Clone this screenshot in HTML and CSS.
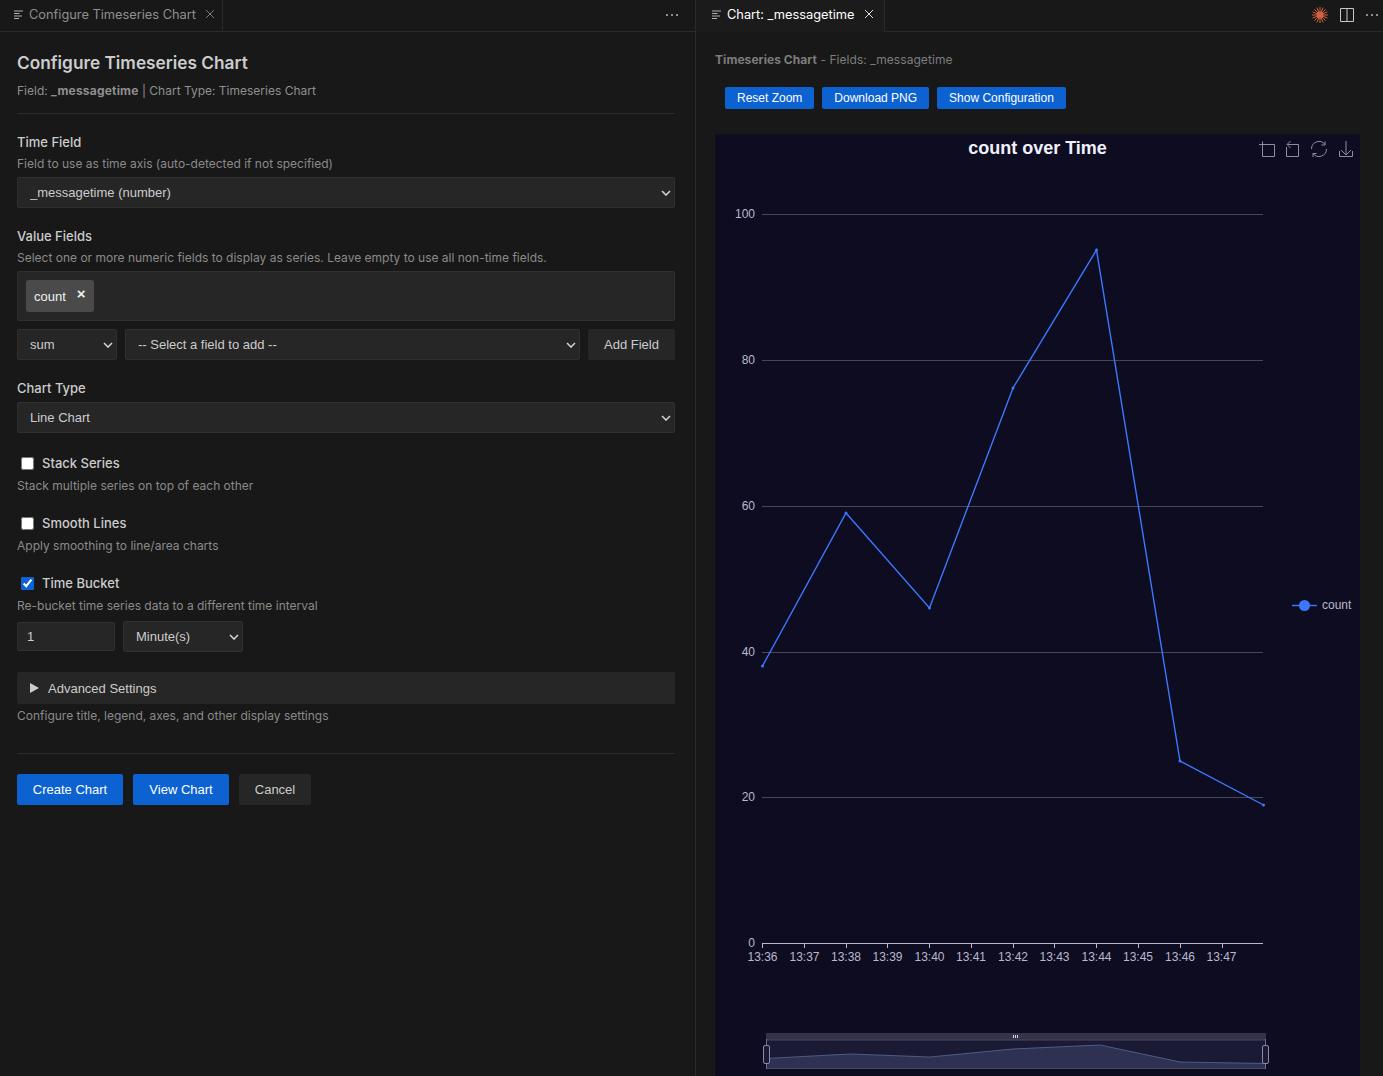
FILE: index.html
```html
<!DOCTYPE html>
<html>
<head>
    <meta charset="utf-8">
    <title>Configure Timeseries Chart</title>
    <link rel="stylesheet" href="styles.css">
</head>
<body>
<div class="workbench">

    <section class="pane pane-left">
        <div class="tabbar">
            <div class="tab">
                <svg class="tab-icon" viewBox="0 0 9 9"><path d="M0 1h9M0 3.500h5.500M0 6h8M0 8.500h5"/></svg>
                <span>Configure Timeseries Chart</span>
                <svg class="tab-close" viewBox="0 0 10 10"><path d="M1 1l8 8M9 1l-8 8"/></svg>
            </div>
            <div class="tabbar-actions">
                <span class="dots"><i></i><i></i><i></i></span>
            </div>
        </div>

        <div class="config">
            <h1>Configure Timeseries Chart</h1>
            <p class="meta">Field: <b>_messagetime</b> | Chart Type: Timeseries Chart</p>
            <hr class="rule">

            <div class="group">
                <label class="group-label">Time Field</label>
                <p class="hint">Field to use as time axis (auto-detected if not specified)</p>
                <select class="select"><option>_messagetime (number)</option></select>
            </div>

            <div class="group">
                <label class="group-label">Value Fields</label>
                <p class="hint">Select one or more numeric fields to display as series. Leave empty to use all non-time fields.</p>
                <div class="chipbox">
                    <span class="chip">count <b>×</b></span>
                </div>
                <div class="add-row">
                    <select class="select select-agg"><option>sum</option></select>
                    <select class="select select-field"><option>-- Select a field to add --</option></select>
                    <button class="btn-add">Add Field</button>
                </div>
            </div>

            <div class="group group-type">
                <label class="group-label">Chart Type</label>
                <select class="select"><option>Line Chart</option></select>
            </div>

            <div class="check-group">
                <label class="check"><input type="checkbox"> Stack Series</label>
                <p class="hint">Stack multiple series on top of each other</p>
            </div>
            <div class="check-group">
                <label class="check"><input type="checkbox"> Smooth Lines</label>
                <p class="hint">Apply smoothing to line/area charts</p>
            </div>
            <div class="check-group">
                <label class="check"><input type="checkbox" checked> Time Bucket</label>
                <p class="hint">Re-bucket time series data to a different time interval</p>
                <div class="bucket-row">
                    <input class="bucket-num" type="text" value="1">
                    <select class="select select-unit"><option>Minute(s)</option></select>
                </div>
            </div>

            <div class="advanced">
                <span class="caret"></span>
                <span>Advanced Settings</span>
            </div>
            <p class="hint hint-adv">Configure title, legend, axes, and other display settings</p>

            <hr class="rule rule-bottom">

            <div class="actions">
                <button class="btn btn-primary btn-create">Create Chart</button>
                <button class="btn btn-primary btn-view">View Chart</button>
                <button class="btn btn-cancel">Cancel</button>
            </div>
        </div>
    </section>

    <section class="pane pane-right">
        <div class="tabbar">
            <div class="tab tab-active">
                <svg class="tab-icon" viewBox="0 0 9 9"><path d="M0 1h9M0 3.500h5.500M0 6h8M0 8.500h5"/></svg>
                <span>Chart: _messagetime</span>
                <svg class="tab-close" viewBox="0 0 10 10"><path d="M1 1l8 8M9 1l-8 8"/></svg>
            </div>
            <div class="tabbar-actions">
                <svg class="spark" viewBox="0 0 16 16">
                    <path d="M8 0v16M0 8h16M2.300 2.300l11.400 11.400M13.700 2.300L2.300 13.700M4.900 .6l6.200 14.800M11.100 .6L4.900 15.400M.6 4.900l14.800 6.200M15.400 4.900L.6 11.100"/>
                    <circle cx="8" cy="8" r="3"/>
                </svg>
                <svg class="split" viewBox="0 0 14 14"><path d="M.5 .5h13v13h-13zM7 .5v13"/></svg>
                <span class="dots"><i></i><i></i><i></i></span>
            </div>
        </div>

        <div class="viewer">
            <p class="viewer-title"><b>Timeseries Chart</b> - Fields: _messagetime</p>
            <div class="viewer-buttons">
                <button class="btn-small">Reset Zoom</button>
                <button class="btn-small">Download PNG</button>
                <button class="btn-small">Show Configuration</button>
            </div>

            <svg class="chart" viewBox="715 134 645 942">
                <text class="chart-title" x="1037.500" y="154" text-anchor="middle">count over Time</text>

                <g class="toolbox">
                    <path d="M1262.500 147v9.500h12v-12h-9.500M1262.500 141.500v6M1259 144.500h6"/>
                    <path d="M1286.500 147v9.500h12v-12h-11M1290.500 141l-3.500 3.500 3.500 3.500"/>
                    <path d="M1311.500 149a7.500 7.500 0 0 1 13.500-4.500M1326.500 149a7.500 7.500 0 0 1-13.500 4.500M1325 141.500v3.500h-3.500M1313 157v-3.500h3.500"/>
                    <path d="M1346 141v14M1341 150l5 5 5-5M1339.500 151v5.500h13v-5.500"/>
                </g>

                <g class="grid">
                    <path d="M762 214.500h501M762 360.500h501M762 506.500h501M762 652.500h501M762 797.500h501"/>
                </g>
                <g class="axis">
                    <path d="M762 943.500h501M762.500 943v5M804.500 943v5M846.500 943v5M887.500 943v5M929.500 943v5M971.500 943v5M1013.500 943v5M1054.500 943v5M1096.500 943v5M1138.500 943v5M1180.500 943v5M1222.500 943v5"/>
                </g>

                <g class="ylabels" text-anchor="end">
                    <text x="755" y="218">100</text>
                    <text x="755" y="364">80</text>
                    <text x="755" y="510">60</text>
                    <text x="755" y="656">40</text>
                    <text x="755" y="801">20</text>
                    <text x="755" y="947">0</text>
                </g>
                <g class="xlabels" text-anchor="middle">
                    <text x="762.500" y="961">13:36</text>
                    <text x="804.500" y="961">13:37</text>
                    <text x="846" y="961">13:38</text>
                    <text x="887.500" y="961">13:39</text>
                    <text x="929.500" y="961">13:40</text>
                    <text x="971" y="961">13:41</text>
                    <text x="1013" y="961">13:42</text>
                    <text x="1054.500" y="961">13:43</text>
                    <text x="1096.500" y="961">13:44</text>
                    <text x="1138" y="961">13:45</text>
                    <text x="1180" y="961">13:46</text>
                    <text x="1221.500" y="961">13:47</text>
                </g>

                <polyline class="series" points="762.500,666 846,513 929.500,608 1013,388 1096.500,250 1180,761 1263.500,805"/>
                <g class="points">
                    <circle cx="762.500" cy="666" r="1.500"/>
                    <circle cx="846" cy="513" r="1.500"/>
                    <circle cx="929.500" cy="608" r="1.500"/>
                    <circle cx="1013" cy="388" r="1.500"/>
                    <circle cx="1096.500" cy="250" r="1.500"/>
                    <circle cx="1180" cy="761" r="1.500"/>
                    <circle cx="1263.500" cy="805" r="1.500"/>
                </g>

                <g class="legend">
                    <path class="series" d="M1292 605.500h25"/>
                    <circle class="legend-dot" cx="1304.500" cy="605.500" r="5.500"/>
                    <text x="1322" y="609">count</text>
                </g>

                <g class="zoom">
                    <rect class="zoom-top" x="766" y="1033" width="500" height="7"/>
                    <rect class="zoom-body" x="766" y="1040" width="500" height="29"/>
                    <path class="zoom-area" d="M766 1058.500L850 1054L930 1057L1013 1049L1100 1045L1180 1062L1265 1063.500V1068H766Z"/>
                    <path class="zoom-line" d="M766 1058.500L850 1054L930 1057L1013 1049L1100 1045L1180 1062L1265 1063.500"/>
                    <path class="zoom-frame" d="M766 1040h500M766 1068.500h500"/>
                    <path class="zoom-stem" d="M766.500 1039v30M1265.500 1039v30"/>
                    <rect class="zoom-handle" x="763.500" y="1045.500" width="6" height="18" rx="1.500"/>
                    <rect class="zoom-handle" x="1262.500" y="1045.500" width="6" height="18" rx="1.500"/>
                    <path class="zoom-grip" d="M1013.500 1035v3M1015.500 1035v3M1017.500 1035v3"/>
                </g>
            </svg>
        </div>
    </section>
</div>
</body>
</html>
```

FILE: styles.css
```css
html, body {
    margin: 0;
    height: 100%;
    overflow: hidden;
    background: #181818;
}

body {
    font-family: Inter, "Noto Sans", sans-serif;
    font-size: 13px;
    color: #ccc;
}

.workbench {
    display: flex;
    height: 1076px;
}

.pane-left {
    width: 696px;
    box-sizing: border-box;
    border-right: 1px solid #2a2a2a;
    flex: none;
}

.pane-right {
    flex: 1;
    min-width: 0;
}

/* tabs */
.tabbar {
    display: flex;
    justify-content: space-between;
    height: 32px;
    box-sizing: border-box;
    background: #181818;
    border-bottom: 1px solid #2a2a2a;
}

.tab {
    display: flex;
    align-items: center;
    gap: 6px;
    padding: 0 9px 3px 14px;
    width: 223px;
    box-sizing: border-box;
    height: 31px;
    border-right: 1px solid #2a2a2a;
    font-size: 12.800px;
    white-space: nowrap;
    color: #8f8f8f;
}

.tab-active {
    width: 189px;
    padding: 0 0 4px 16px;
    color: #fff;
    background: #1b1b1b;
    height: 32px;
}

.tab-icon {
    flex: none;
    width: 9px;
    height: 9px;
    fill: none;
    stroke: #b0b0b0;
    stroke-width: 1;
}

.tab-close {
    flex: none;
    width: 10px;
    height: 10px;
    margin-left: 3px;
    fill: none;
    stroke: #7a7a7a;
    stroke-width: 1;
}

.tab-active .tab-close {
    stroke: #e0e0e0;
}

.tabbar-actions {
    display: flex;
    align-items: center;
    gap: 12px;
    padding: 0 5px 2px 0;
}

.pane-left .tabbar-actions {
    padding-right: 17px;
}

.dots {
    display: flex;
    gap: 3px;
}

.dots i {
    width: 2px;
    height: 2px;
    border-radius: 50%;
    background: #b5b5b5;
}

.spark {
    width: 16px;
    height: 16px;
    stroke: #d4623f;
    stroke-width: 1;
    fill: #d4623f;
}

.split {
    width: 14px;
    height: 14px;
    fill: none;
    stroke: #c8c8c8;
    stroke-width: 1;
}

/* config form */
.config {
    padding: 0 20px 0 17px;
}

h1 {
    margin: 0;
    padding-top: 20px;
    font-size: 17.250px;
    line-height: 22px;
    font-weight: 600;
    color: #ccc;
}

.meta {
    margin: 8px 0 0;
    font-size: 12px;
    line-height: 18px;
    color: #8f8f8f;
}

.meta b {
    font-weight: 700;
    letter-spacing: .2px;
}

.rule {
    margin: 13px 0 0;
    border: 0;
    border-top: 1px solid #2a2a2a;
}

.group {
    margin-top: 19px;
}

.group-label {
    display: block;
    font-size: 13px;
    line-height: 18px;
    font-weight: 500;
    color: #ccc;
}

.hint {
    margin: 5px 0 5px;
    font-size: 12px;
    line-height: 16px;
    color: #8a8a8a;
}

.select {
    display: block;
    width: 100%;
    height: 31px;
    box-sizing: border-box;
    padding: 0 24px 0 12px;
    appearance: none;
    -webkit-appearance: none;
    border: 1px solid #303030;
    border-radius: 2px;
    background-color: #262626;
    background-image: url("data:image/svg+xml,%3Csvg xmlns='http://www.w3.org/2000/svg' width='10' height='6'%3E%3Cpath d='M1 1l4 4 4-4' fill='none' stroke='%23d0d0d0' stroke-width='1.600'/%3E%3C/svg%3E");
    background-repeat: no-repeat;
    background-position: right 3px center;
    font-family: "Liberation Sans", Arial, sans-serif;
    font-size: 13px;
    color: #ccc;
}

.group-type .select {
    margin-top: 5px;
}

.chipbox {
    display: flex;
    align-items: center;
    height: 50px;
    box-sizing: border-box;
    padding: 0 8px;
    background: #262626;
    border: 1px solid #303030;
    border-radius: 2px;
}

.chip {
    display: flex;
    align-items: center;
    gap: 11px;
    width: 68px;
    height: 32px;
    padding: 0 0 0 8px;
    box-sizing: border-box;
    background: #4a4a4a;
    border-radius: 3px;
    font-family: "Liberation Sans", Arial, sans-serif;
    font-size: 13px;
    color: #f0f0f0;
}

.chip b {
    font-size: 15px;
    line-height: 12px;
    margin-top: -4px;
}

.add-row {
    display: flex;
    gap: 8px;
    margin-top: 8px;
}

.select-agg {
    width: 100px;
    flex: none;
}

.select-field {
    flex: 1;
    width: auto;
    min-width: 0;
}

.btn-add {
    flex: none;
    width: 87px;
    height: 31px;
    border: 0;
    border-radius: 2px;
    background: #262626;
    font-family: "Liberation Sans", Arial, sans-serif;
    font-size: 13px;
    color: #ccc;
}

.check-group {
    margin-top: 20px;
}

.group-type + .check-group {
    margin-top: 21px;
}

.check {
    display: flex;
    align-items: center;
    gap: 8px;
    height: 18px;
    padding-left: 4px;
    font-size: 13px;
    font-weight: 500;
    color: #ccc;
}

.check input {
    width: 13px;
    height: 13px;
    margin: 0;
    accent-color: #0b62d6;
}

.check-group .hint {
    margin: 6px 0 0;
}

.bucket-row {
    display: flex;
    align-items: center;
    gap: 8px;
    margin-top: 7px;
}

.bucket-num {
    width: 98px;
    height: 29px;
    box-sizing: border-box;
    padding: 0 9px;
    border: 1px solid #303030;
    border-radius: 2px;
    background: #262626;
    font-family: "Liberation Sans", Arial, sans-serif;
    font-size: 13px;
    color: #ccc;
}

.select-unit {
    width: 120px;
}

.advanced {
    display: flex;
    align-items: center;
    gap: 9px;
    height: 32px;
    margin-top: 20px;
    padding-left: 13px;
    background: #262626;
    border-radius: 2px;
    font-family: "Liberation Sans", Arial, sans-serif;
    font-size: 13px;
    color: #ccc;
}

.caret {
    width: 0;
    height: 0;
    border-left: 9px solid #ccc;
    border-top: 5.500px solid transparent;
    border-bottom: 5.500px solid transparent;
}

.hint-adv {
    margin: 4px 0 0;
}

.rule-bottom {
    margin-top: 29px;
}

.actions {
    display: flex;
    gap: 10px;
    margin-top: 20px;
}

.btn {
    height: 31px;
    border: 0;
    border-radius: 2px;
    font-family: "Liberation Sans", Arial, sans-serif;
    font-size: 13px;
}

.btn-primary {
    background: #0b62d0;
    color: #fff;
}

.btn-create {
    width: 106px;
}

.btn-view {
    width: 96px;
}

.btn-cancel {
    width: 72px;
    background: #262626;
    color: #ccc;
}

/* chart side */
.viewer {
    padding: 0 0 0 19px;
}

.viewer-title {
    margin: 0;
    padding-top: 20px;
    font-size: 12px;
    line-height: 16px;
    letter-spacing: .06px;
    color: #7d7d7d;
}

.viewer-buttons {
    display: flex;
    gap: 8px;
    margin-top: 19px;
    padding-left: 10px;
}

.btn-small {
    height: 22px;
    padding: 0 12px;
    border: 0;
    border-radius: 2px;
    background: #0b62d0;
    font-family: "Liberation Sans", Arial, sans-serif;
    font-size: 12px;
    color: #fff;
}

.chart {
    display: block;
    width: 645px;
    height: 942px;
    margin-top: 25px;
    background: #0e0c21;
    font-family: "Liberation Sans", Arial, sans-serif;
}

.chart-title {
    font-size: 18px;
    font-weight: 700;
    fill: #eef0fb;
}

.toolbox path {
    fill: none;
    stroke: #8f8ca8;
    stroke-width: 1;
}

.grid path {
    fill: none;
    stroke: #484753;
    stroke-width: 1;
}

.axis path {
    fill: none;
    stroke: #b9b8ce;
    stroke-width: 1;
}

.ylabels text, .xlabels text, .legend text {
    font-size: 12px;
    fill: #b9b8ce;
}

.series {
    fill: none;
    stroke: #3b78ff;
    stroke-width: 1.400;
}

.points circle {
    fill: #3b78ff;
}

.legend-dot {
    fill: #3b78ff;
}

.zoom-top {
    fill: #35324a;
}

.zoom-body {
    fill: #1a1a35;
}

.zoom-area {
    fill: #2e3152;
}

.zoom-line {
    fill: none;
    stroke: #4b5c88;
    stroke-width: 1;
}

.zoom-frame {
    fill: none;
    stroke: #4a4763;
    stroke-width: 1;
}

.zoom-stem {
    fill: none;
    stroke: #6f6d8c;
    stroke-width: 1;
}

.zoom-handle {
    fill: #1a1a35;
    stroke: #8b89a8;
    stroke-width: 1;
}

.zoom-grip {
    fill: none;
    stroke: #d8d8e6;
    stroke-width: 1;
}
```
